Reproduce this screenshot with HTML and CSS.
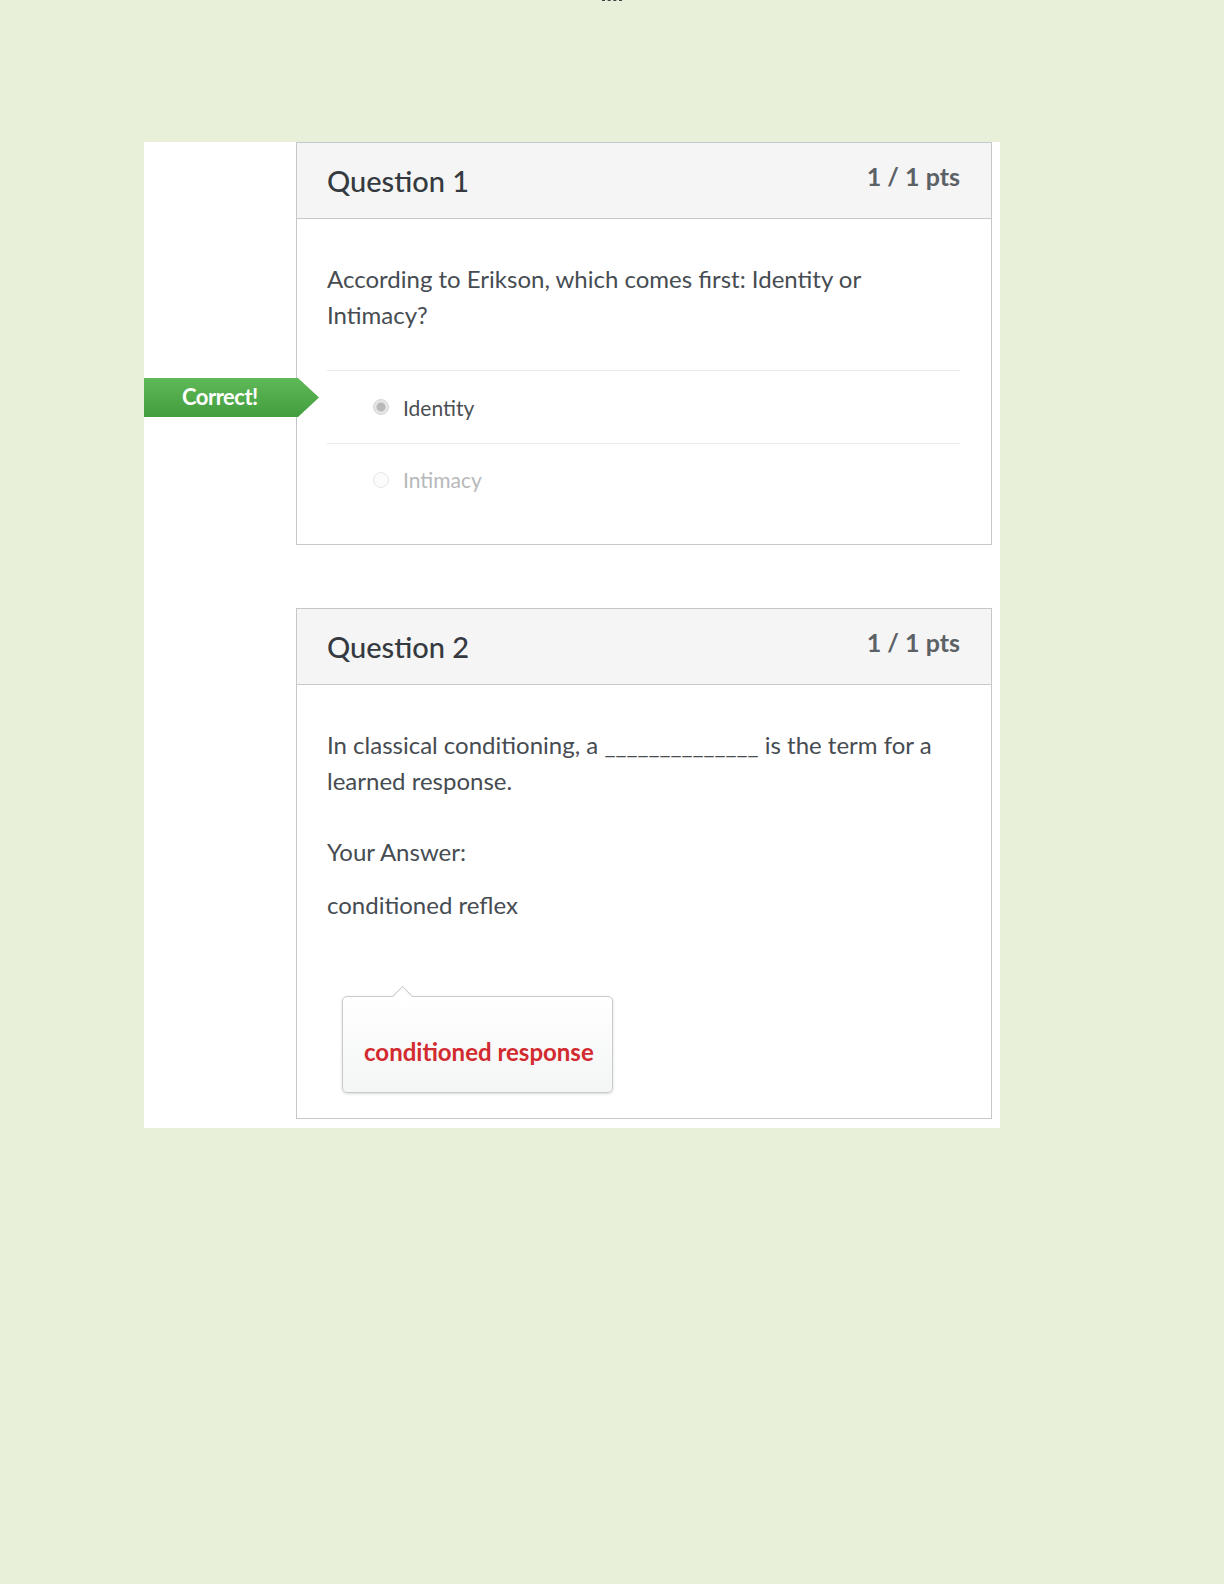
FILE: index.html
```html
<!DOCTYPE html>
<html lang="en">
<head>
    <meta charset="UTF-8">
    <title>Quiz Results</title>
    <link rel="stylesheet" href="styles.css">
</head>
<body>
    <div class="page-mark"></div>

    <div class="quiz-panel">
        <!-- Question 1 -->
        <div class="question">
            <div class="question-header">
                <h2 class="question-title">Question 1</h2>
                <span class="question-points">1 / 1 pts</span>
            </div>
            <div class="question-body">
                <p class="question-text">According to Erikson, which comes first: Identity or Intimacy?</p>
                <ul class="answers">
                    <li class="answer answer-selected">
                        <span class="answer-flag">Correct!</span>
                        <span class="radio radio-checked"></span>
                        <span class="answer-label">Identity</span>
                    </li>
                    <li class="answer answer-muted">
                        <span class="radio"></span>
                        <span class="answer-label">Intimacy</span>
                    </li>
                </ul>
            </div>
        </div>

        <!-- Question 2 -->
        <div class="question">
            <div class="question-header">
                <h2 class="question-title">Question 2</h2>
                <span class="question-points">1 / 1 pts</span>
            </div>
            <div class="question-body question-body-short">
                <p class="question-text">In classical conditioning, a ______________ is the term for a learned response.</p>
                <p class="answer-caption">Your Answer:</p>
                <p class="answer-given">conditioned reflex</p>
                <div class="answer-bubble">
                    <span class="answer-correct">conditioned response</span>
                </div>
            </div>
        </div>
    </div>
</body>
</html>
```

FILE: styles.css
```css
* {
    margin: 0;
    padding: 0;
    box-sizing: border-box;
}

body {
    font-family: 'Lato', 'Open Sans', sans-serif;
    color: #464c51;
    background-color: #e8f0da;
    min-height: 100vh;
}

.page-mark {
    width: 20px;
    margin: 0 auto;
    border-top: 1px dashed #444;
}

.quiz-panel {
    width: 856px;
    margin: 141px 0 0 144px;
    padding: 0 8px 9px 152px;
    background-color: #fff;
}

.question {
    border: 1px solid #c4c8cb;
}

.question + .question {
    margin-top: 63px;
}

.question-header {
    display: flex;
    justify-content: space-between;
    align-items: flex-start;
    height: 76px;
    padding: 0 31px 0 30px;
    background-color: #f5f5f5;
    border-bottom: 1px solid #c4c8cb;
}

.question-title {
    font-size: 29px;
    font-weight: 500;
    line-height: 76px;
    color: #343a3f;
}

.question-points {
    font-size: 25px;
    font-weight: 700;
    line-height: 66px;
    color: #5c6166;
}

.question-body {
    padding: 42px 31px 29px 30px;
}

.question-body-short {
    padding-bottom: 25px;
}

.question-text {
    font-size: 24px;
    line-height: 36px;
}

.answers {
    list-style: none;
    margin-top: 37px;
    border-top: 1px solid #e9e9e9;
}

.answer {
    position: relative;
    display: flex;
    align-items: center;
    height: 72px;
    padding-left: 46px;
    font-size: 21px;
}

.answer + .answer {
    border-top: 1px solid #e9e9e9;
}

.answer-selected {
    color: #4a4f53;
}

.answer-muted {
    color: #b6b8ba;
}

.radio {
    width: 16px;
    height: 16px;
    margin-right: 14px;
    border: 1px solid #e6e6e6;
    border-radius: 50%;
    background-color: #fbfbfb;
}

.radio-checked {
    border-color: #d6d6d6;
    background: radial-gradient(circle, #b9b9b9 0 4px, #e6e6e6 5px);
}

/* green ribbon hanging off the left of the card */
.answer-flag {
    position: absolute;
    left: -183px;
    top: 7px;
    width: 175px;
    height: 39px;
    padding-left: 38px;
    font-size: 22px;
    font-weight: 700;
    line-height: 37px;
    color: #fff;
    letter-spacing: -0.5px;
    background: linear-gradient(#60b958, #429d3e);
    clip-path: polygon(0 0, 154px 0, 100% 50%, 154px 100%, 0 100%);
}

.answer-caption {
    margin-top: 35px;
    font-size: 24px;
    line-height: 36px;
}

.answer-given {
    margin-top: 17px;
    font-size: 24px;
    line-height: 36px;
}

.answer-bubble {
    position: relative;
    width: 271px;
    height: 97px;
    margin: 73px 0 0 15px;
    padding: 40px 0 0 21px;
    border: 1px solid #c8cbcd;
    border-radius: 5px;
    background: linear-gradient(#fff, #f4f5f5);
    box-shadow: 0 1px 3px rgba(0, 0, 0, 0.15);
}

.answer-bubble::before {
    content: "";
    position: absolute;
    top: -8px;
    left: 52px;
    width: 14px;
    height: 14px;
    border-top: 1px solid #c8cbcd;
    border-left: 1px solid #c8cbcd;
    background-color: #fff;
    transform: rotate(45deg);
}

.answer-correct {
    font-size: 24px;
    font-weight: 700;
    color: #d22b2f;
}
```
